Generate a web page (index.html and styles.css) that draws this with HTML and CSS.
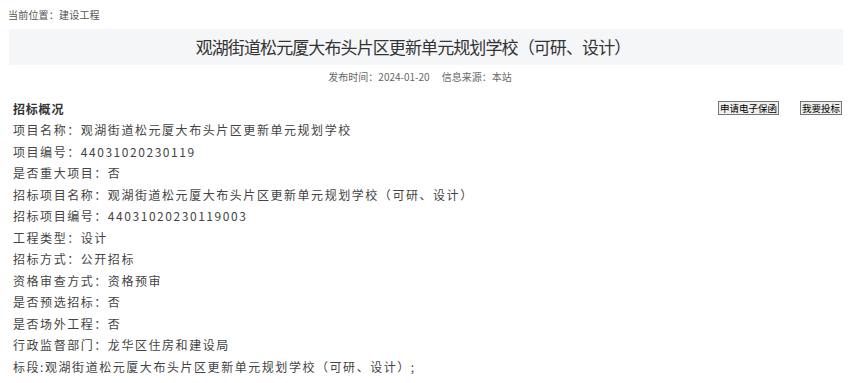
FILE: index.html
```html
<!DOCTYPE html>
<html lang="zh-CN">
<head>
<meta charset="utf-8">
<title>观湖街道松元厦大布头片区更新单元规划学校（可研、设计）</title>
<link rel="stylesheet" href="styles.css">
</head>
<body>
<div class="crumb">当前位置：建设工程</div>
<div class="title-band"><h1 class="title">观湖街道松元厦大布头片区更新单元规划学校（可研、设计）</h1></div>
<div class="meta"><span>发布时间：2024-01-20</span><span>信息来源：本站</span></div>
<div class="content">
  <div class="head-row">
    <div class="head">招标概况</div>
    <div class="btns"><button class="btn">申请电子保函</button><button class="btn">我要投标</button></div>
  </div>
  <div class="line">项目名称：观湖街道松元厦大布头片区更新单元规划学校</div>
  <div class="line">项目编号：44031020230119</div>
  <div class="line">是否重大项目：否</div>
  <div class="line">招标项目名称：观湖街道松元厦大布头片区更新单元规划学校（可研、设计）</div>
  <div class="line">招标项目编号：44031020230119003</div>
  <div class="line">工程类型：设计</div>
  <div class="line">招标方式：公开招标</div>
  <div class="line">资格审查方式：资格预审</div>
  <div class="line">是否预选招标：否</div>
  <div class="line">是否场外工程：否</div>
  <div class="line">行政监督部门：龙华区住房和建设局</div>
  <div class="line">标段:观湖街道松元厦大布头片区更新单元规划学校（可研、设计）;</div>
</div>
</body>
</html>
```
FILE: styles.css
```css
html, body {
  margin: 0;
  padding: 0;
  background: #ffffff;
  font-family: "Noto Sans CJK SC", "Noto Sans", sans-serif;
  color: #333333;
}
.crumb {
  padding: 8px 0 0 8px;
  height: 29px;
  box-sizing: border-box;
  font-size: 10px;
  line-height: 14px;
  letter-spacing: 0.2px;
  color: #555555;
}
.title-band {
  margin: 0 11px 0 9px;
  height: 36px;
  background: #f5f6f8;
  display: flex;
  align-items: center;
  justify-content: center;
}
.title {
  margin: 0;
  font-size: 17px;
  font-weight: normal;
  letter-spacing: -0.9px;
  color: #333333;
  line-height: 36px;
  padding-right: 26px;
}
.meta {
  display: flex;
  justify-content: center;
  gap: 12px;
  font-size: 10px;
  line-height: 14px;
  color: #666666;
  padding: 5px 14px 0 0;
}
.content {
  padding: 13px 12px 0 13px;
}
.head-row {
  display: flex;
  justify-content: space-between;
  align-items: center;
  height: 22px;
}
.head {
  font-size: 12px;
  font-weight: bold;
  letter-spacing: 0.8px;
  color: #333333;
}
.btns {
  display: flex;
  gap: 21px;
  align-items: center;
}
.btn {
  font-family: "Noto Sans CJK SC", sans-serif;
  font-size: 9.5px;
  line-height: 12px;
  padding: 0 1px;
  margin: 0;
  border: 1px solid #767676;
  background: #efefef;
  color: #000000;
  border-radius: 0;
}
.line {
  font-size: 12px;
  line-height: 21.5px;
  letter-spacing: 1.55px;
  color: #444444;
  white-space: nowrap;
}
```
